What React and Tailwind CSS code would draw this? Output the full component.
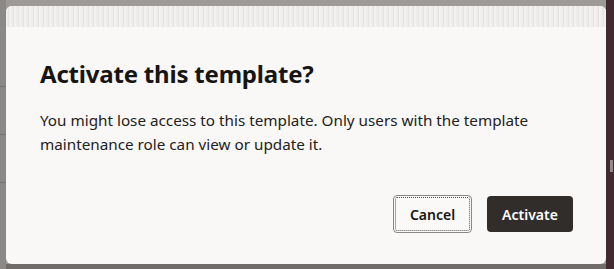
import React from "react";

const App = () => {
  return (
    <div
      className="w-[614px] h-[269px] overflow-hidden bg-[#9d9a98] flex"
      style={{ fontFamily: "'Noto Sans', 'Open Sans', sans-serif" }}
    >
      <div className="w-[6px] shrink-0 flex flex-col pt-[86px] bg-[#8b8988]">
        <div className="h-[1px] bg-[#767472]" />
        <div className="h-[47px]" />
        <div className="h-[1px] bg-[#767472]" />
        <div className="h-[47px]" />
        <div className="h-[1px] bg-[#767472]" />
      </div>
      <div className="flex flex-col w-[600px] shrink-0">
        <div className="h-[6px] bg-[#9d9a98]" />
        <div className="h-[258px] bg-[#f9f8f7] rounded-[6px] overflow-hidden flex flex-col">
          <div className="h-[21px] bg-[#eae9e8] bg-[repeating-linear-gradient(90deg,#eeedec_0px,#eeedec_2px,#e4e3e2_2px,#e4e3e2_3px,#f3f2f1_3px,#f3f2f1_5px)]" />
          <div className="pl-[34px] pr-[33px] pt-[32px] flex-1 flex flex-col">
            <h2 className="text-[24px] leading-[30px] font-bold text-[#161513] tracking-[-0.2px]">
              Activate this template?
            </h2>
            <p className="mt-[19px] text-[15.25px] leading-[24px] text-[#232120] w-[520px]">
              You might lose access to this template. Only users with the template maintenance role can view or update it.
            </p>
            <div className="mt-auto mb-[31px] flex justify-end gap-[15px]">
              <button className="w-[79px] h-[38px] rounded-[4px] border border-[#888] outline-1 outline-dotted outline-[#555] outline-offset-[-3px] bg-[#faf9f8] text-[14px] font-semibold text-[#161513]">
                Cancel
              </button>
              <button className="w-[86px] h-[36px] mt-[1px] rounded-[4px] bg-[#312d2a] text-[14px] font-semibold text-white">
                Activate
              </button>
            </div>
          </div>
        </div>
        <div className="flex-1 bg-[#6f6c6a]" />
      </div>
      <div className="flex-1 bg-[#432a30] relative">
        <div className="absolute left-[4px] top-[160px] w-[3px] h-[12px] bg-[#8f8a8b]" />
      </div>
    </div>
  );
};

export default App;
